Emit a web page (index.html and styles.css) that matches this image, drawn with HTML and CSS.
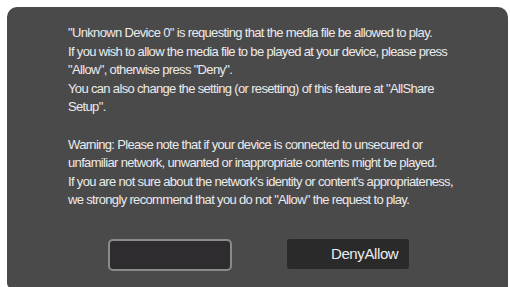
FILE: index.html
```html
<!DOCTYPE html>
<html>
<head>
<meta charset="utf-8">
<link rel="stylesheet" href="styles.css">
</head>
<body>
<div class="dialog">
  <div class="msg">
    <p>"Unknown Device 0" is requesting that the media file be allowed to play.<br>
    If you wish to allow the media file to be played at your device, please press<br>
    "Allow", otherwise press "Deny".<br>
    You can also change the setting (or resetting) of this feature at "AllShare<br>
    Setup".</p>
    <p>Warning: Please note that if your device is connected to unsecured or<br>
    unfamiliar network, unwanted or inappropriate contents might be played.<br>
    If you are not sure about the network's identity or content's appropriateness,<br>
    we strongly recommend that you do not "Allow" the request to play.</p>
  </div>
  <div class="buttons">
    <div class="btn btn-focus"></div>
    <div class="btn btn-plain">DenyAllow</div>
  </div>
</div>
</body>
</html>
```
FILE: styles.css
```css
html, body { margin: 0; padding: 0; background: #ffffff; }
body { width: 510px; height: 287px; overflow: hidden; position: relative; }
.dialog {
  margin: 7px 0 0 7px;
  width: 501px;
  height: 282px;
  background: #4b4a4b;
  border-radius: 10px 10px 0 6px;
  box-sizing: border-box;
  padding: 17px 0 0 61px;
  font-family: "Liberation Sans", Arial, sans-serif;
  color: #ebebeb;
}
.msg { font-size: 13px; line-height: 18.6px; letter-spacing: -0.66px; }
.msg p { margin: 0 0 18.6px 0; white-space: nowrap; }
.msg p:last-child { margin-bottom: 0; }
.buttons { display: flex; margin-top: 29px; margin-left: 40px; gap: 55px; }
.btn { box-sizing: border-box; height: 32px; border-radius: 5px; }
.btn-focus { width: 124px; background: #2e2c2e; border: 2px solid #8c8b8c; }
.btn-plain {
  width: 122px; height: 30px; background: #2b2a2b; border-radius: 3px;
  font-size: 15px; color: #ececec; display: flex; align-items: center;
  padding-left: 44px; letter-spacing: -0.4px;
}
```
